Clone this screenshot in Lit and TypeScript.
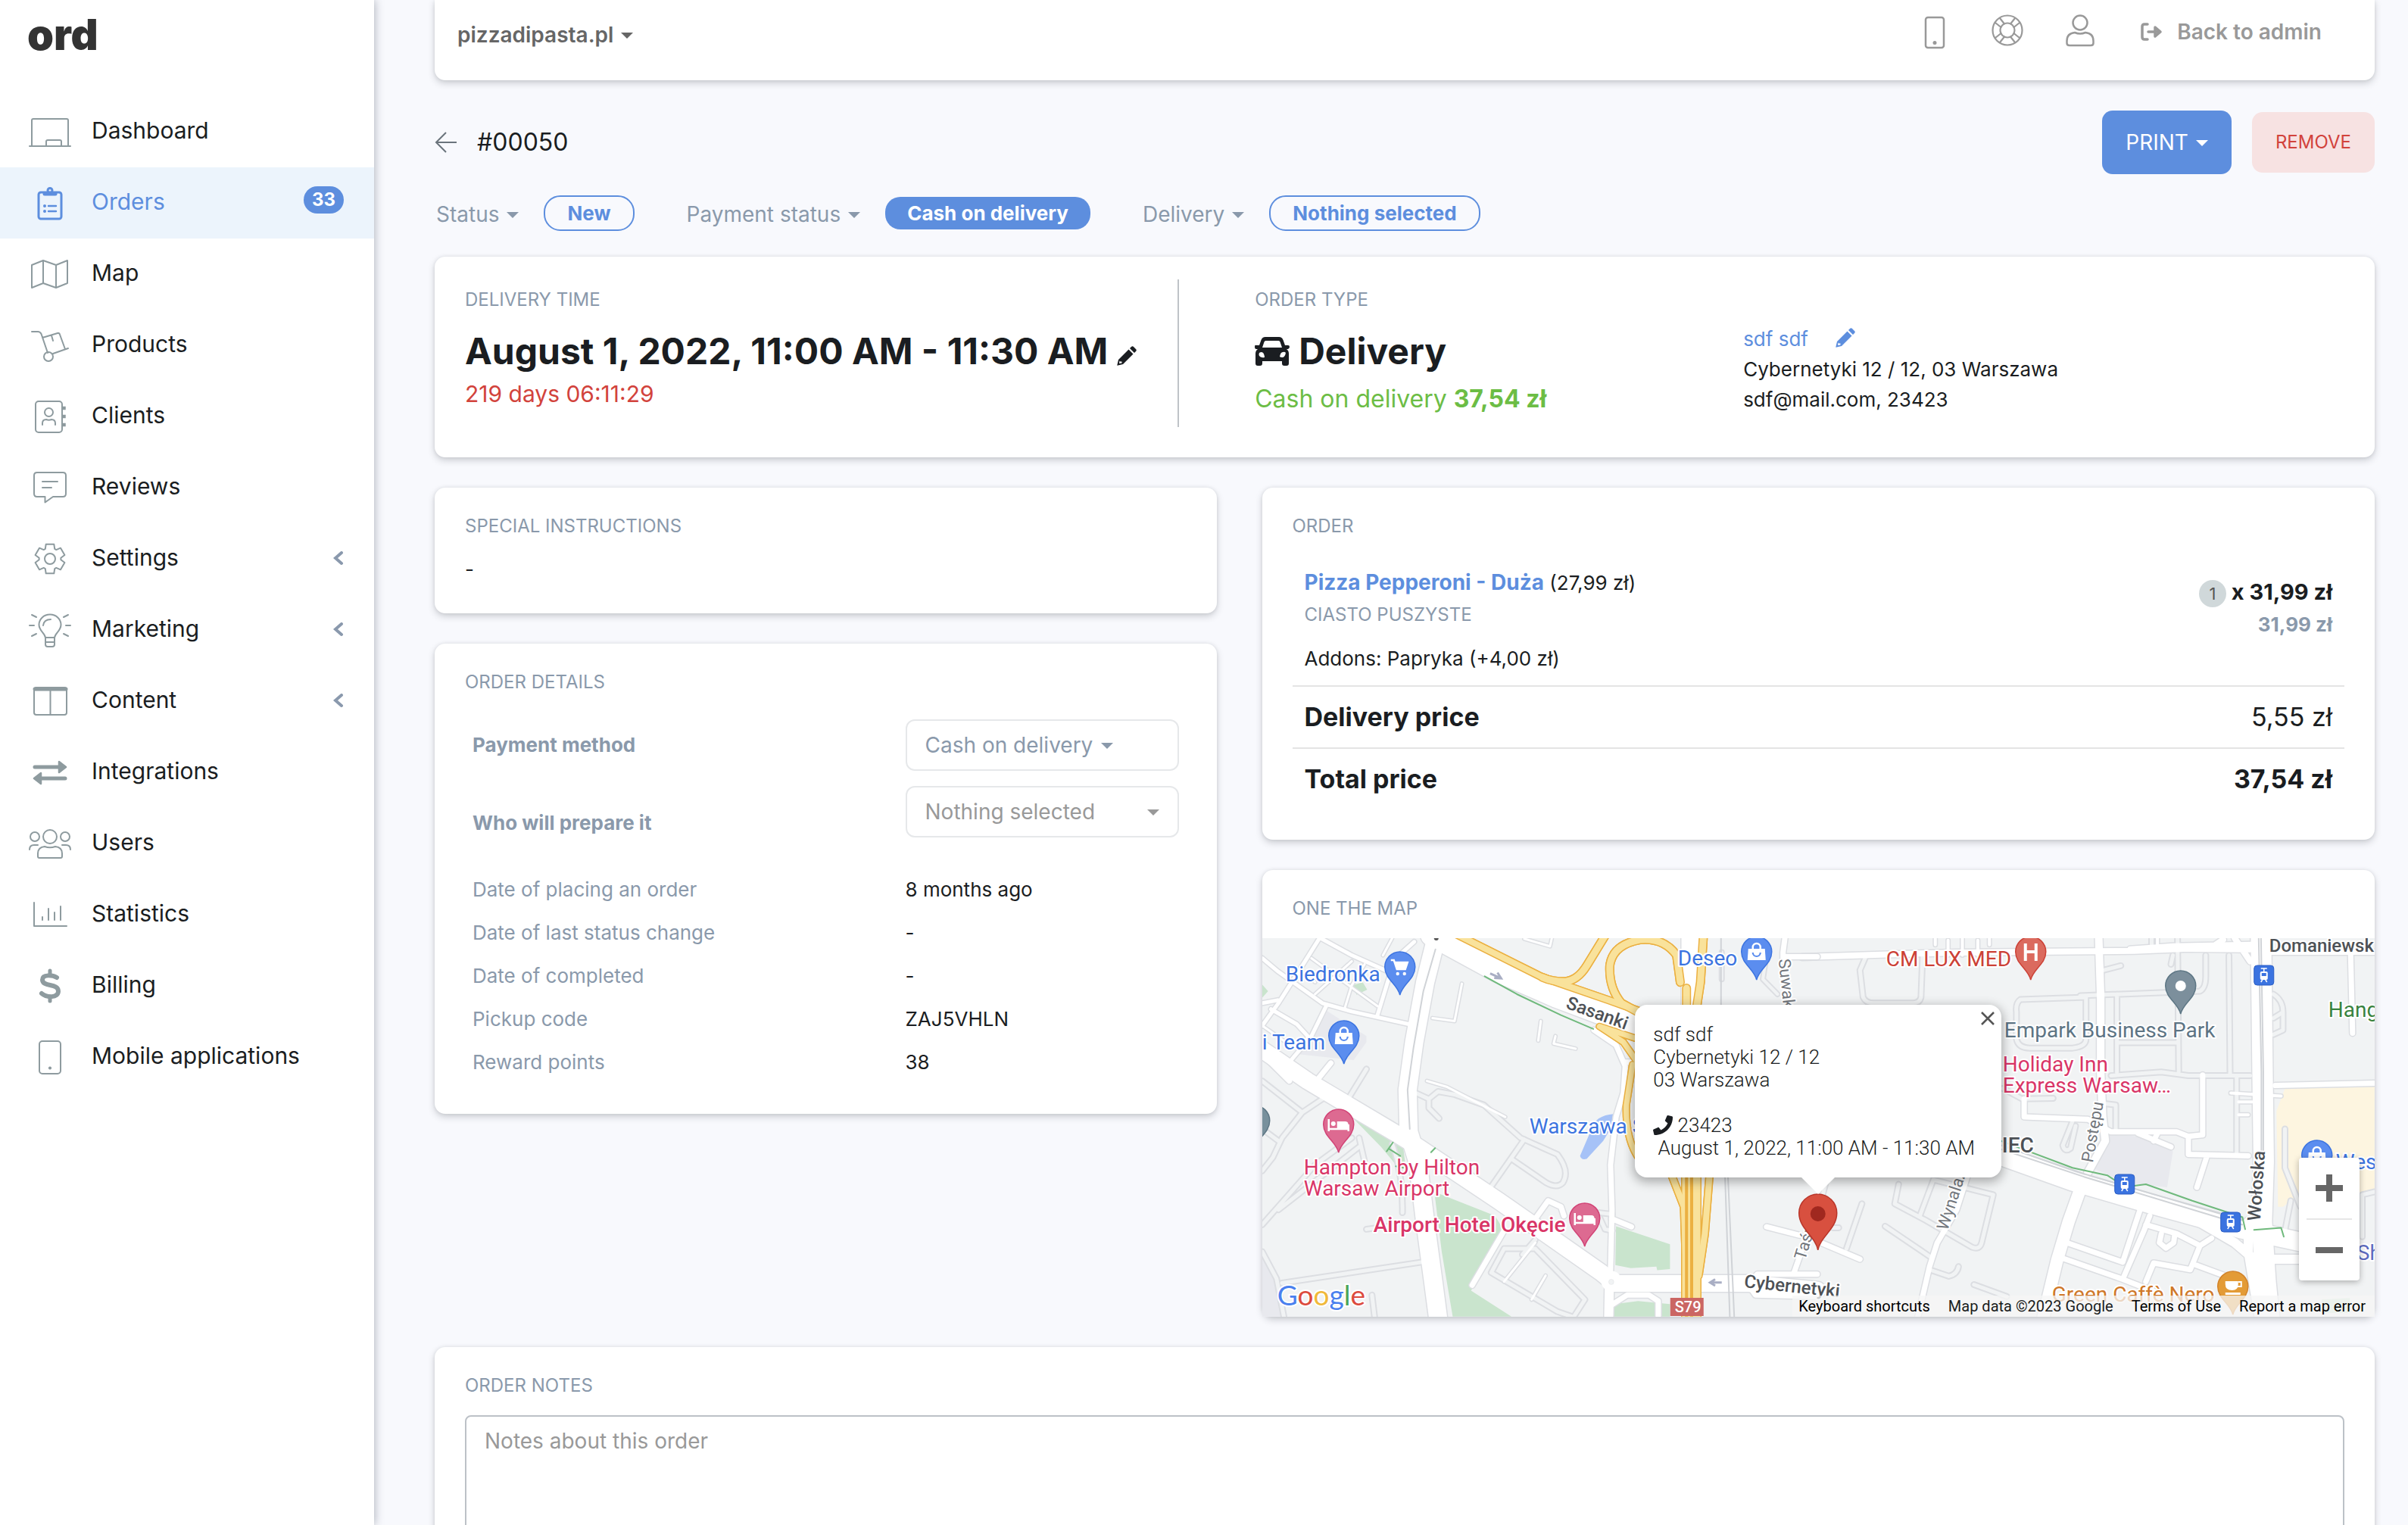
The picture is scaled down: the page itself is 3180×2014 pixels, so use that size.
import { LitElement, html, svg, css, nothing } from "lit";
import { customElement, property } from "lit/decorators.js";
import { classMap } from "lit/directives/class-map.js";

const gearPath = (() => {
  const pts: string[] = [];
  for (let i = 0; i < 6; i++) {
    const base = (i * 60 - 90) * (Math.PI / 180);
    const steps: Array<[number, number]> = [
      [-0.44, 14.5],
      [-0.27, 20],
      [0.27, 20],
      [0.44, 14.5],
    ];
    for (const [a, r] of steps) {
      pts.push(`${(30 + Math.cos(base + a) * r).toFixed(1)} ${(30 + Math.sin(base + a) * r).toFixed(1)}`);
    }
  }
  return `M${pts.join("L")}Z`;
})();

const icons: Record<string, unknown> = {
  dashboard: svg`<path d="M6 49V15q0-2 2-2H52q2 0 2 2V49M3 49H57M25 49V43q0-2 2-2H43q2 0 2 2V49"/>`,
  orders: svg`<g stroke-width="3"><rect x="15" y="16" width="30" height="35" rx="3"/><path d="M23 34h0M23 41h0" stroke-width="4"/><path d="M28 34H38M28 41H38" stroke-width="2.4"/><path d="M23 18H37" stroke-width="5"/><circle cx="30" cy="13.500" r="3"/></g>`,
  map: svg`<path d="M6 18L21 12L38 18L53 12V42L38 48L21 42L6 48ZM21 12V42M38 18V48"/>`,
  products: svg`<path d="M6 12H14q3 0 4.500 3L27 40M34 41L54 34M20 20L40 14q2-.5 2.700 1L50 35M32 17L34 24"/><circle cx="28" cy="45" r="6"/>`,
  clients: svg`<rect x="11" y="10" width="35" height="41" rx="4"/><circle cx="28.500" cy="24.500" r="5.500"/><path d="M20 41V39q0-5 5-5q3.500 1.500 7 0q5 0 5 5V41"/><path d="M48 19h0.500M48 30h0.500M48 41h0.500" stroke-width="4.500" stroke-linecap="square"/>`,
  reviews: svg`<path d="M13 10H47q4 0 4 4V38q0 4-4 4H34L23.500 49.500V42H13q-4 0-4-4V14q0-4 4-4ZM20 22H40M20 30H32"/>`,
  settings: svg`<path d="${gearPath}"/><circle cx="30" cy="30" r="7"/>`,
  marketing: svg`<path d="M24 40C23 34 15.500 31 15.500 23A14.500 13.500 0 0 1 44.500 23C44.500 31 37 34 36 40ZM24 40V49q0 3 3 3H33q3 0 3-3V40M24 46H36M21 24q1-8 10-8M3 24H9M51 24H57M6 10L12 13M54 10L48 13M6 38L12 35M54 38L48 35"/>`,
  content: svg`<rect x="9" y="12" width="43" height="36" rx="3"/><path d="M30.500 14V48"/><path d="M10 14H51" stroke-width="5"/>`,
  integrations: svg`<path d="M10 23H44M16 38H50" stroke-width="5"/><path d="M42 16L51 23L42 30ZM18 31L9 38L18 45Z" fill="currentColor" stroke-width="2.500"/>`,
  users: svg`<circle cx="30" cy="21" r="9"/><circle cx="10" cy="21" r="6"/><circle cx="50" cy="21" r="6"/><path d="M14 47V43q0-8 9-9q7 2.500 14 0q9 1 9 9V47q0 2-2 2H16q-2 0-2-2ZM3 38q0-6 6-6H14M57 38q0-6-6-6H46"/>`,
  statistics: svg`<path d="M9 14V45H52M20 33V37M28 22V37M36 27V37M44 19V37"/>`,
  billing: svg`<path d="M39 19C34 16 20 14 20 22C20 32 41 26 41 37C41 46 26 46 19 40" stroke-width="6"/><path d="M30 10V16M30 44V50" stroke-width="5"/>`,
  mobile: svg`<rect x="16" y="9" width="28" height="43" rx="4"/><circle cx="30" cy="44.500" r="1.800" fill="currentColor" stroke="none"/><circle cx="30" cy="44.500" r="1"/>`,
};

const pencil = html`<svg class="pencil" viewBox="0 0 26 26" aria-hidden="true">
  <path fill="currentColor" fill-rule="evenodd" d="M15.500 4.500L21.500 10.500L8 24L1.500 25.500Q0 26 .5 24.500L2 18ZM3.500 19.500L3 23L6.500 22.500V20.500H4.500ZM17 3L19 1Q20.500-.5 22 1L25 4Q26.500 5.500 25 7L23 9Z"/>
</svg>`;

const caret = html`<svg class="caret" viewBox="0 0 16 8" aria-hidden="true"><path fill="currentColor" d="M0 0H16L8 8Z"/></svg>`;

interface NavItem {
  icon: string;
  label: string;
  badge?: string;
  nested?: boolean;
  active?: boolean;
}

const NAV: NavItem[] = [
  { icon: "dashboard", label: "Dashboard" },
  { icon: "orders", label: "Orders", badge: "33", active: true },
  { icon: "map", label: "Map" },
  { icon: "products", label: "Products" },
  { icon: "clients", label: "Clients" },
  { icon: "reviews", label: "Reviews" },
  { icon: "settings", label: "Settings", nested: true },
  { icon: "marketing", label: "Marketing", nested: true },
  { icon: "content", label: "Content", nested: true },
  { icon: "integrations", label: "Integrations" },
  { icon: "users", label: "Users" },
  { icon: "statistics", label: "Statistics" },
  { icon: "billing", label: "Billing" },
  { icon: "mobile", label: "Mobile applications" },
];

@customElement("side-nav")
class SideNav extends LitElement {
  static styles = css`
    :host {
      display: block;
      background: #fff;
      box-shadow: 0 0 12px rgba(40, 50, 70, 0.4);
      position: relative;
      z-index: 1;
    }
    .logo {
      display: block;
      padding: 14px 36px 0;
      height: 113px;
      font-size: 56px;
      font-weight: 900;
      line-height: 64px;
      color: #333;
      text-decoration: none;
    }
    ul {
      list-style: none;
      margin: 0;
      padding: 0;
    }
    .item {
      display: flex;
      align-items: center;
      padding: 0 40px 0 36px;
      height: 94px;
      color: #1a1d21;
      text-decoration: none;
      font-size: 30px;
    }
    .item.active {
      background: #ecf4fc;
      color: #5d8ede;
    }
    .icon {
      width: 60px;
      height: 60px;
      margin-right: 25px;
      color: #8e9b9f;
      fill: none;
      stroke: currentColor;
      stroke-width: 2;
      stroke-linecap: round;
      stroke-linejoin: round;
    }
    .active .icon {
      color: #5d8ede;
    }
    .label {
      flex: 1;
      padding-bottom: 4px;
    }
    .badge {
      align-self: flex-start;
      margin-top: 25px;
      padding: 0 11px;
      border-radius: 18px;
      background: #5d8ede;
      color: #fff;
      font-size: 24px;
      font-weight: 700;
      line-height: 36px;
    }
    .chevron {
      width: 14px;
      height: 20px;
      fill: none;
      stroke: #8a99ad;
      stroke-width: 4;
      stroke-linecap: round;
    }
  `;

  render() {
    return html`
      <a class="logo" href="#home">ord</a>
      <nav aria-label="Main">
        <ul>
          ${NAV.map(
            (n) => html`<li>
              <a class=${classMap({ item: true, active: !!n.active })} href="#${n.icon}">
                <svg class="icon" viewBox="0 0 60 60" aria-hidden="true">${icons[n.icon]}</svg>
                <span class="label">${n.label}</span>
                ${n.badge ? html`<span class="badge">${n.badge}</span>` : nothing}
                ${n.nested
                  ? html`<svg class="chevron" viewBox="0 0 14 20" aria-hidden="true"><path d="M11 2L3 9L11 16"/></svg>`
                  : nothing}
              </a>
            </li>`
          )}
        </ul>
      </nav>
    `;
  }
}

/* Street geometry is kept in two survey tiles, west and east, each with its own projection onto the map. */
type Road = [kind: "street" | "alley" | "highway" | "rail" | "path", width: number, d: string];

const WEST_ROADS: Road[] = [
  ["alley", 5, "M56 730L165 835L110 920L85 985L56 1030M165 835L220 790M56 890L100 930M56 1210L200 1010L300 920M100 1160L320 950M320 920L335 1000"],
  ["alley", 5, "M475 770L510 790L535 765L580 775L660 810L760 920L860 975Q895 1030 875 1070Q860 1090 830 1070L735 990M770 925L670 1100M510 790V820L538 855"],
  ["alley", 5, "M290 790L340 690M410 940Q440 1040 438 1170M340 1225L400 1215M975 1170L1010 1175M975 1185L990 1225L1010 1230"],
  ["alley", 5, "M715 1290L680 1370L860 1500L900 1517M715 1290L800 1290L935 1460L905 1517M800 1260L765 1310M110 1405L490 1335M56 1300L95 1390L115 1517M355 1445L362 1517"],
  ["rail", 2, "M1306 253V475M1317 1052L1330 1517M1325 1052L1342 1517"],
  ["alley", 4, "M1430 310L1420 390L1460 440M1308 300V390"],
  ["street", 5, "M212 253L165 345L100 470L56 545M215 253L300 310L400 365M56 320L100 365L220 470L300 498L455 540M370 510L400 390L420 320L470 265M230 480L190 580L135 660M56 470L98 460M80 490L150 540L180 580L175 620"],
  ["street", 3, "M190 320L370 480M300 330L200 440M410 253L385 310M280 490L300 410L335 340M155 360L200 400M56 545L120 600M600 405L580 530L520 520M815 530L808 595M855 580L850 605L910 622M505 730L560 750L718 850M840 280L845 253M770 255L840 280"],
  ["street", 7, "M130 730L56 640M210 720L243 670M800 1190L835 1130L870 1150L878 1180M1008 1190L1062 1217M1430 1217L1520 1245M715 1230L628 1412"],
  ["street", 3, "M800 1270L715 1400M828 1380L790 1460"],
  ["street", 7, "M960 560L1020 610L1045 680L1040 770L1020 850L1005 1010L1009 1160L1005 1360M1043 667H1071"],
  ["street", 7, "M1005 1480L1050 1445H1110L1135 1465V1517M1480 253L1475 300V330M1475 315H1568M1380 1410L1405 1375H1568M1380 1410L1400 1445L1568 1450M1505 1370L1525 1300"],
  ["street", 12, "M1002 1400L1000 1517"],
  ["street", 22, "M1010 1406H1380L1568 1428"],
  ["street", 22, "M40 612L180 730L420 905L480 950L700 1130L980 1370L1008 1398"],
  ["street", 24, "M530 253L500 400L470 600L452 760L455 900L480 1000L500 1200L522 1400L536 1530"],
  ["street", 32, "M520 240L700 360L860 445L1000 510L1080 545"],
  ["rail", 2, "M528 290L495 430L468 620L452 760L458 890"],
  ["street", 26, "M1225 240V480"],
  ["highway", 8, "M585 240L820 384L1000 460L1080 495"],
  ["highway", 9, "M990 245L940 345Q915 395 880 398Q845 398 820 384"],
  ["highway", 9, "M1080 500L1035 470Q1000 420 1003 345Q1010 275 1085 258Q1150 250 1185 310L1195 400"],
  ["highway", 9, "M1258 245L1250 400L1240 480M1212 420V480"],
  ["highway", 7, "M975 548L1040 600L1080 670M975 548L1080 590M1065 675L1048 810Q1045 920 1080 985"],
  ["highway", 8, "M1170 1040L1205 1150L1212 1400M1275 1040L1262 1240L1245 1380"],
  ["highway", 24, "M1225 1030V1530"],
  ["path", 2, "M662 380L750 440L870 510L958 556M395 965L412 935M402 957L432 980M516 968L527 954M420 1015L440 1020"],
];

const EAST_ROADS: Road[] = [
  ["alley", 5, "M165 315L150 360L158 450Q165 470 185 470H285Q305 470 308 450L312 315M735 450L565 458Q552 470 555 500V590Q560 620 590 620H700Q735 615 735 590V450"],
  ["alley", 5, "M720 445L1030 430Q1045 420 1045 380V310M815 440V700M820 602H970M972 253L975 700M1105 310L1108 710M800 712L930 700L1000 712H1160M1125 715V970M905 253V285M960 310L955 340"],
  ["alley", 5, "M780 360L825 345M780 805L812 810V900M700 865L675 945Q680 970 695 955L708 880M520 755L570 790L650 788"],
  ["alley", 5, "M250 1075L240 1140L320 1195L440 1285Q460 1295 465 1270L495 1110L340 1060L305 1180M215 1215L335 1320M330 1360L380 1382Q402 1375 405 1350M445 1410L530 1450M155 1140L115 1290M80 1220H95M65 1052L40 1180"],
  ["alley", 5, "M1220 440Q1245 460 1245 500L1220 520M1245 500V560L1220 575M1250 890V1020L1290 1150M1250 1230L1265 1130M1450 1110L1482 1100M1450 1110V1250"],
  ["street", 4, "M345 253V275M378 260V310M415 253V310M455 260V310M485 253V275M1130 800H1165M1130 843H1155M1110 770L1240 780M920 253V285"],
  ["street", 7, "M40 1265L150 1325M1420 305L1425 570M575 790V850L740 858L800 900H970L1000 915L1037 910V710M1000 915V975L1155 980M1047 985L1022 1085M870 905L955 950M910 930L920 905"],
  ["street", 7, "M875 1160L830 1335L690 1272M675 1322L830 1392L925 1440M890 1210L970 1240L1030 1280L1005 1360L910 1338L890 1400M1030 1280L1060 1255M1020 1345L1125 1395M830 1392L885 1230L900 1180M930 1240L925 1270L942 1288L962 1270L965 1240"],
  ["street", 8, "M0 316L220 307L400 301L640 298L860 295L1000 288L1160 290M850 290L960 280L1160 275M1070 275L1090 258M1120 253L1160 330"],
  ["street", 7, "M430 1040L400 1160L350 1270L330 1350L300 1517M1225 745L1482 737M1210 300H1482"],
  ["street", 10, "M768 253L773 450V700L778 850L785 930L740 1035"],
  ["street", 16, "M722 1085L690 1200L660 1330L625 1517"],
  ["street", 12, "M1000 1180L1120 1270L1170 1325H1290M1155 1200V1300L1185 1530"],
  ["street", 27, "M1188 240L1192 700L1195 1000L1190 1200L1200 1400L1210 1530"],
  ["street", 25, "M505 975L700 1065L900 1140L1140 1225L1300 1270"],
  ["rail", 2, "M1188 253L1194 700V980M1182 253L1189 700V980M515 945L730 1040L1140 1195M515 958L730 1050L1140 1210"],
  ["path", 2, "M515 930L700 1020L790 1045L820 1070M860 1080L890 1075L1010 1130L1140 1185L1147 1225M1170 1227L1240 1220L1247 1250"],
];

const roadLayers = (roads: Road[]) => svg`
  ${roads.map(([kind, w, d]) => svg`<path class="${kind} casing" stroke-width=${w + (kind === "alley" ? 4 : 3)} d=${d} />`)}
  ${roads.filter(([k]) => k === "alley").map(([, w, d]) => svg`<path class="alley" stroke-width=${w} d=${d} />`)}
  ${roads.filter(([k]) => k === "street").map(([, w, d]) => svg`<path class="street" stroke-width=${w} d=${d} />`)}
  ${roads.filter(([k]) => k === "highway").map(([, w, d]) => svg`<path class="highway casing" stroke-width=${w + 3} d=${d} />`)}
  ${roads.filter(([k]) => k === "highway").map(([, w, d]) => svg`<path class="highway" stroke-width=${w} d=${d} />`)}
  ${roads.filter(([k]) => k === "rail" || k === "path").map(([k, w, d]) => svg`<path class=${k} stroke-width=${w} d=${d} />`)}
`;

const glyphs: Record<string, unknown> = {
  cart: svg`<path d="M-12-46H-8L-4-34H7L10-43H-7" fill="none" stroke="#fff" stroke-width="2.500"/><path d="M-7-43H10L7-35H-4Z" fill="#fff"/><circle cx="-3" cy="-28" r="2.200" fill="#fff"/><circle cx="6" cy="-28" r="2.200" fill="#fff"/>`,
  bag: svg`<path d="M-11-41H11L12-26H-12Z" fill="#fff"/><path d="M-5-40V-43A5 5 0 0 1 5-43V-40" fill="none" stroke="#fff" stroke-width="2.500"/><path d="M-5-36A5 5 0 0 0 5-36" fill="none" stroke="#5b8def" stroke-width="2.200"/>`,
  bed: svg`<path d="M-13-44V-28M-13-31H13V-28M13-31V-37" fill="none" stroke="#fff" stroke-width="2.500"/><circle cx="-7" cy="-38" r="3" fill="#fff"/><path d="M-2-41H9Q13-41 13-36V-32H-2Z" fill="#fff"/>`,
  hospital: svg`<path d="M-7-48V-25M7-48V-25M-7-37H7" fill="none" stroke="#fff" stroke-width="4"/>`,
  dot: svg`<circle cx="0" cy="-37" r="7" fill="#fff"/>`,
  cup: svg`<path d="M-10-44H7V-40Q7-32-1-32Q-10-32-10-40ZM-10-29H10V-26H-10Z" fill="#fff"/><path d="M7-43H11V-37H6" fill="none" stroke="#fff" stroke-width="2"/>`,
};

const pin = (x: number, y: number, fill: string, edge: string, glyph: string) => svg`
  <g transform="translate(${x} ${y})">
    <path d="M0 0C-3-14-20-21-20-37A20 20 0 0 1 20-37C20-21 3-14 0 0Z" fill=${fill} stroke=${edge} stroke-width="1.500" />
    ${glyphs[glyph]}
  </g>`;

const tram = (x: number, y: number) => svg`
  <g transform="translate(${x} ${y})">
    <rect x="-13" y="-13" width="26" height="26" rx="4" fill="#3b73e0" stroke="#2a5dc4" />
    <path d="M-4-9H4M0-9V-5M-4 9L-2 6M4 9L2 6" stroke="#fff" stroke-width="1.500" fill="none" />
    <rect x="-5" y="-5" width="10" height="11" rx="2" fill="#fff" />
    <path d="M-3-3H3V1H-3Z" fill="#3b73e0" />
  </g>`;

@customElement("delivery-map")
class DeliveryMap extends LitElement {
  static styles = css`
    :host {
      display: block;
      position: relative;
      height: 500px;
      overflow: hidden;
      font-family: Roboto, "Liberation Sans", sans-serif;
      background: #f1f3f4;
    }
    .canvas {
      display: block;
      width: 100%;
      height: 100%;
    }
    .tile path {
      vector-effect: non-scaling-stroke;
    }
    .street,
    .alley,
    .highway,
    .rail,
    .path {
      fill: none;
      stroke-linejoin: round;
      stroke-linecap: round;
    }
    .street { stroke: #fff; }
    .alley { stroke: #f1f3f4; }
    .street.casing,
    .alley.casing { stroke: #dcdee2; }
    .highway { stroke: #f9e29b; }
    .highway.casing { stroke: #ebb041; }
    .rail { stroke: #d0d3d7; }
    .path { stroke: #6fb97c; }
    .rail.casing,
    .path.casing { stroke: none; }
    .place {
      font-size: 28px;
      stroke: #fff;
      stroke-width: 4px;
      stroke-linejoin: round;
      paint-order: stroke;
    }
    .strong { font-weight: 500; }
    .name {
      font-size: 24px;
      font-weight: 500;
      fill: #4d5156;
    }
    .district {
      font-weight: 500;
      fill: #4d5156;
    }
    .lane {
      font-size: 22px;
      fill: #73777d;
    }
    .blue { fill: #3c74e0; }
    .rose { fill: #d93567; }
    .red { fill: #cc4136; }
    .slate { fill: #5d7484; }
    .green { fill: #39833f; }
    .amber { fill: #cf7829; }
    .violet { fill: #5c6bc0; }
    .shield {
      font-size: 20px;
      font-weight: 500;
      fill: #fff;
    }
    .brand {
      font-family: Lato, Roboto, sans-serif;
      font-size: 37px;
      stroke: #fff;
      stroke-width: 4px;
      paint-order: stroke;
    }
    .bubble {
      position: absolute;
      left: 50%;
      top: 88px;
      transform: translateX(-50%);
      box-sizing: border-box;
      width: 484px;
      padding: 24px;
      border-radius: 16px;
      background: #fff;
      box-shadow: 0 4px 14px 2px rgba(0, 0, 0, 0.3);
      color: #1a1d21;
      font-size: 26px;
      font-weight: 300;
      line-height: 30px;
      white-space: nowrap;
    }
    .bubble::after {
      content: "";
      position: absolute;
      left: 50%;
      top: 100%;
      border: 22px solid transparent;
      border-top-color: #fff;
      border-bottom: 0;
      transform: translateX(-50%);
    }
    .bubble p {
      margin: 0 0 30px;
    }
    .bubble p:last-of-type {
      margin: 0;
    }
    .phone {
      width: 26px;
      height: 26px;
      vertical-align: -4px;
    }
    .close {
      position: absolute;
      right: 8px;
      top: 8px;
      width: 20px;
      height: 20px;
      padding: 0;
      border: 0;
      background: none;
      color: #555;
    }
    .close svg {
      display: block;
    }
    .zoom {
      position: absolute;
      right: 20px;
      top: 290px;
      width: 80px;
      border-radius: 4px;
      background: #fff;
      box-shadow: 0 2px 8px rgba(0, 0, 0, 0.3);
      color: #666;
    }
    .zoom button {
      display: grid;
      place-items: center;
      width: 100%;
      height: 80px;
      padding: 0;
      border: 0;
      background: none;
      color: inherit;
    }
    .zoom hr {
      margin: 0 10px;
      border: 0;
      height: 2px;
      background: #e6e6e6;
    }
    .legal {
      position: absolute;
      right: 0;
      bottom: 0;
      display: flex;
      gap: 24px;
      padding: 0 12px 0 8px;
      background: rgba(245, 245, 245, 0.75);
      font-size: 20px;
      line-height: 28px;
    }
    .legal a,
    .legal button {
      padding: 0;
      border: 0;
      background: none;
      color: #000;
      font: inherit;
      text-decoration: none;
    }
  `;

  render() {
    return html`
      <svg class="canvas" viewBox="0 0 1470 500" preserveAspectRatio="xMidYMid slice" role="img" aria-label="Map">
        <rect width="1470" height="500" fill="#f1f3f4" />
        <g class="tile" transform="matrix(.5102 0 0 .3954 713 -100)">
          <path fill="#fdf5e0" d="M1250 755L1482 748V1100L1450 1105L1285 1110L1245 1150H1232L1228 830Z" />
          <path fill="#e8e9ee" d="M800 905L900 920L960 965L945 1085L840 1070L750 1020Z" />
          <path fill="#cfe6d2" d="M1345 1460L1418 1455V1505H1345Z" />
          ${roadLayers(EAST_ROADS)}
        </g>
        <g class="tile" transform="matrix(.4847 0 0 .3954 -27 -100)">
          <path fill="#e8e9ee" d="M225 490L340 580V600L305 660L150 640L190 590ZM56 1300L95 1390L115 1517H56Z" />
          <path fill="#c9e4cd" d="M525 1100L690 1180L715 1230L625 1430L735 1517H575L545 1300ZM300 850L440 950L447 1020L420 1010L380 950ZM1020 1215L1167 1275V1358L1132 1362L1130 1350L1060 1355L1018 1345ZM1015 1475L1080 1465L1167 1475V1517H1015ZM303 410L330 400L342 425L313 442ZM56 408L72 430L56 452Z" />
          <path fill="#a6c2f7" d="M1013 840Q965 845 955 885L922 980Q925 995 940 990L985 930L1005 890Z" />
          ${roadLayers(WEST_ROADS)}
          <path fill="none" stroke="#ebb041" stroke-width="4" d="M1212 1030V1517M1226 1030V1517" />
          <ellipse cx="1007" cy="1398" rx="28" ry="34" fill="#fff" />
          <ellipse cx="1007" cy="1401" rx="7" ry="9" fill="#f1f3f4" stroke="#dcdee2" />
          <path fill="none" stroke="#a9aec4" stroke-width="3" d="M677 371L705 386M697 368L707 387L688 386M1308 1403H1276M1290 1392L1276 1403L1290 1414" />
        </g>
        <circle cx="230" cy="0" r="3" fill="#555" />

        ${pin(-10, 278, "#78909c", "#5d7684", "")}
        ${pin(182, 75, "#5b8def", "#3c74e0", "cart")}
        ${pin(108, 166, "#5b8def", "#3c74e0", "bag")}
        ${pin(101, 283, "#dd6a91", "#d24376", "bed")}
        ${pin(426, 407, "#dd6a91", "#d24376", "bed")}
        ${pin(653, 55, "#5b8def", "#3c74e0", "bag")}
        ${pin(1015, 55, "#db6a5e", "#cc4136", "hospital")}
        ${pin(1213, 100, "#7c8f9c", "#5d7684", "dot")}
        ${pin(1393, 324, "#5b8def", "#3c74e0", "bag")}
        ${pin(1282, 497, "#e39b36", "#d2832a", "cup")}
        ${tram(1323, 49)} ${tram(1139, 325)} ${tram(1279, 375)}

        <text class="place blue" x="31" y="57">Biedronka</text>
        <text class="place blue" x="0" y="147">i Team</text>
        <text class="place rose" x="55" y="312">Hampton by Hilton</text>
        <text class="place rose" x="55" y="340">Warsaw Airport</text>
        <text class="place rose strong" x="147" y="388">Airport Hotel Okęcie</text>
        <text class="place blue" x="353" y="258">Warszawa S</text>
        <text class="place blue" x="549" y="36">Deseo</text>
        <text class="place red" x="824" y="37">CM LUX MED</text>
        <text class="place slate" x="980" y="131">Empark Business Park</text>
        <text class="place rose" x="978" y="176">Holiday Inn</text>
        <text class="place rose" x="978" y="204">Express Warsaw…</text>
        <text class="place green" x="1408" y="104">Hang</text>
        <text class="place blue" x="1418" y="305">Wes</text>
        <text class="place violet" x="1446" y="425">Sh</text>
        <text class="place amber" x="1043" y="480">Green Caffè Nero</text>
        <text class="place district" x="977" y="283">IEC</text>
        <text class="place name" x="1330" y="18">Domaniewsk</text>
        <text class="place name" transform="translate(400 92) rotate(20)">Sasanki</text>
        <text class="place name" transform="translate(636 461) rotate(6)">Cybernetyki</text>
        <text class="place name" transform="translate(1318 374) rotate(-86)">Wołoska</text>
        <text class="place lane" transform="translate(682 28) rotate(84)">Suwak</text>
        <text class="place lane" transform="translate(717 426) rotate(-73)">Taśn</text>
        <text class="place lane" transform="translate(1097 297) rotate(-80)">Postępu</text>
        <text class="place lane" transform="translate(905 387) rotate(-72)">Wynalaz</text>

        <rect x="539" y="475" width="44" height="24" fill="#cb6663" />
        <text class="shield" x="545" y="494">S79</text>
        <text class="brand" x="20" y="485"><tspan fill="#4a80ee">G</tspan><tspan fill="#dc4b3e">o</tspan><tspan fill="#f0b93a">o</tspan><tspan fill="#4a80ee">g</tspan><tspan fill="#4ba658">l</tspan><tspan fill="#dc4b3e">e</tspan></text>

        <g transform="translate(734 412)">
          <path d="M0 0C-3-18-25-28-25-49A25 25 0 0 1 25-49C25-28 3-18 0 0Z" fill="#d8503f" stroke="#b93529" stroke-width="1.500" />
          <circle cx="0" cy="-48" r="10" fill="#a0281f" />
        </g>
      </svg>

      <div class="bubble">
        <p>sdf sdf<br />Cybernetyki 12 / 12<br />03 Warszawa</p>
        <p><svg class="phone" viewBox="0 0 512 512" aria-hidden="true"><path fill="currentColor" d="M493 25L389 1c-11-3-23 3-27 14l-48 112c-4 10-1 21 7 28l61 50c-36 76-98 139-177 177l-50-61c-7-8-18-11-28-7L15 362C4 366-2 378 1 389l24 104c2 11 12 19 23 19 256 0 464-207 464-464 0-11-8-21-19-23z"/></svg> 23423<br />&nbsp;August 1, 2022, 11:00 AM - 11:30 AM</p>
        <button class="close" aria-label="Close">
          <svg width="20" height="20" viewBox="0 0 20 20"><path d="M2 2L18 18M18 2L2 18" stroke="currentColor" stroke-width="2.500" /></svg>
        </button>
      </div>

      <div class="zoom">
        <button aria-label="Zoom in"><svg width="36" height="36" viewBox="0 0 36 36"><path d="M18 0V36M0 18H36" stroke="currentColor" stroke-width="8" /></svg></button>
        <hr />
        <button aria-label="Zoom out"><svg width="36" height="36" viewBox="0 0 36 36"><path d="M0 18H36" stroke="currentColor" stroke-width="8" /></svg></button>
      </div>

      <div class="legal">
        <button>Keyboard shortcuts</button>
        <span>Map data ©2023 Google</span>
        <a href="#terms">Terms of Use</a>
        <a href="#report">Report a map error</a>
      </div>
    `;
  }
}

@customElement("panel-card")
class PanelCard extends LitElement {
  @property() heading = "";

  static styles = css`
    :host {
      display: block;
      border-radius: 14px;
      background: #fff;
      box-shadow: 0 4px 10px rgba(50, 55, 65, 0.22), 0 0 4px rgba(50, 55, 65, 0.1);
    }
    h2 {
      margin: 0;
      padding: 35px 40px 23px;
      color: #8a99ab;
      font-size: 24px;
      font-weight: 400;
      line-height: 32px;
      text-transform: uppercase;
    }
  `;

  render() {
    return html`<h2>${this.heading}</h2><slot></slot>`;
  }
}

@customElement("app-root")
class AppRoot extends LitElement {
  static styles = css`
    :host {
      display: grid;
      grid-template-columns: 494px 1fr;
      height: 100vh;
      overflow: hidden;
      background: #f8f9fd;
      color: #1a1d21;
      font-family: Inter, "Liberation Sans", sans-serif;
      font-size: 26px;
      line-height: 36px;
    }
    main {
      overflow: hidden;
      padding: 0 44px 0 80px;
    }
    button,
    select,
    textarea {
      font: inherit;
      color: inherit;
    }
    button {
      display: inline-flex;
      align-items: center;
      padding: 0;
      border: 0;
      background: none;
    }
    a {
      color: #5d8ede;
      text-decoration: none;
    }
    .caret {
      width: 16px;
      height: 8px;
      margin: 2px 0 0 10px;
      flex: none;
    }
    .card {
      border-radius: 14px;
      background: #fff;
      box-shadow: 0 4px 10px rgba(50, 55, 65, 0.22), 0 0 4px rgba(50, 55, 65, 0.1);
    }
    .topbar {
      display: flex;
      justify-content: space-between;
      align-items: center;
      height: 92px;
      padding: 0 70px 14px 30px;
      border-radius: 0 0 14px 14px;
      font-size: 28px;
      font-weight: 600;
      color: #666;
    }
    .tools {
      display: flex;
      align-items: center;
      gap: 48px;
      padding-bottom: 8px;
      color: #999;
    }
    .tools svg {
      display: block;
      fill: none;
      stroke: currentColor;
      stroke-linecap: round;
      stroke-linejoin: round;
    }
    .back {
      display: flex;
      align-items: center;
      gap: 19px;
      margin-left: 8px;
      color: #999;
    }
    .head {
      display: flex;
      align-items: center;
      margin-top: 40px;
      gap: 27px;
    }
    .head h1 {
      flex: 1;
      margin: 0;
      font-size: 32px;
      font-weight: 400;
    }
    .head .arrow {
      color: #6b747c;
    }
    .arrow svg {
      display: block;
    }
    .print {
      height: 84px;
      padding: 0 31px;
      border-radius: 14px;
      background: #5d8ede;
      color: #fff;
      font-size: 28px;
    }
    .remove {
      height: 80px;
      padding: 0 31px;
      border-radius: 14px;
      background: #f7e2e2;
      color: #d2433c;
      font-size: 24px;
    }
    .filters {
      display: flex;
      align-items: center;
      gap: 69px;
      margin: 28px 0 34px;
      padding-left: 2px;
      height: 47px;
      color: #8a99ab;
      font-size: 28px;
    }
    .filter {
      display: flex;
      align-items: center;
      gap: 33px;
    }
    .filter button {
      padding-top: 3px;
    }
    .pill {
      padding: 0 29px;
      border-radius: 20px;
      background: #5d8ede;
      color: #fff;
      font-size: 26px;
      font-weight: 700;
      line-height: 43px;
    }
    .pill.outline {
      border: 2px solid #5d8ede;
      border-radius: 22px;
      background: none;
      color: #5d8ede;
    }
    .summary {
      display: flex;
      padding: 30px 40px 40px;
    }
    .summary h2 {
      margin: 0 0 16px;
      color: #8a99ab;
      font-size: 24px;
      font-weight: 400;
      line-height: 32px;
    }
    .when {
      box-sizing: border-box;
      flex: 0 0 38%;
      padding: 11px 0 24px;
      border-right: 2px solid #bfc3c8;
    }
    .big {
      display: flex;
      align-items: center;
      gap: 12px;
      font-size: 48px;
      font-weight: 700;
      line-height: 72px;
      white-space: nowrap;
    }
    .big button {
      padding-top: 12px;
    }
    .pencil {
      width: 26px;
      height: 26px;
    }
    .overdue {
      color: #d2433c;
      font-size: 30px;
      line-height: 40px;
    }
    .type {
      display: grid;
      grid-template-columns: 13fr 16fr;
      flex: 1;
      padding: 11px 0 0 100px;
    }
    .car {
      width: 46px;
      height: 40px;
    }
    .due {
      margin-top: 7px;
      color: #6cbd45;
      font-size: 32px;
      line-height: 40px;
    }
    .client {
      padding-top: 48px;
      line-height: 40px;
    }
    .client button {
      margin-left: 36px;
      color: #5d8ede;
      vertical-align: -2px;
    }
    .columns {
      display: grid;
      grid-template-columns: repeat(12, 1fr);
      column-gap: 60px;
      align-items: start;
      margin: 40px 0;
    }
    .col {
      display: grid;
      gap: 40px;
      grid-column: span 5;
    }
    .col.wide {
      grid-column: span 7;
    }
    .text {
      margin: 0;
      padding: 0 40px 40px;
    }
    .sheet {
      padding: 0 40px 40px;
    }
    table {
      width: 100%;
      border-collapse: collapse;
    }
    th {
      font-weight: inherit;
      text-align: left;
    }
    .details {
      table-layout: fixed;
    }
    .details th,
    .details td {
      height: 57px;
      padding: 0 10px;
    }
    .details th {
      width: 60%;
      box-sizing: border-box;
      color: #8a99ab;
    }
    .details .strong th {
      font-weight: 700;
    }
    .details .strong td {
      padding: 10px;
    }
    .details .loose td {
      padding-bottom: 40px;
    }
    .field {
      display: flex;
      align-items: center;
      box-sizing: border-box;
      height: 68px;
      padding: 0 24px;
      border: 2px solid #e6e8ea;
      border-radius: 12px;
      color: #8a99ab;
      font-size: 28px;
    }
    .field select {
      appearance: none;
      padding: 0;
      border: 0;
      background: none;
      outline: 0;
    }
    .field.stretch {
      color: #999;
    }
    .field.stretch select {
      flex: 1;
      min-width: 0;
    }
    .lines td,
    .lines th {
      padding: 0 16px;
      height: 80px;
      font-size: 34px;
      text-align: right;
    }
    .lines th {
      text-align: left;
      font-weight: 700;
    }
    .lines tr + tr {
      border-top: 2px solid #e4e4e4;
    }
    .lines .product th {
      padding: 15px 16px 17px;
      font-size: 26px;
      font-weight: 400;
    }
    .lines .product td {
      padding-top: 28px;
      font-size: 29px;
      font-weight: 700;
      line-height: 40px;
      vertical-align: top;
    }
    .product a {
      font-size: 28px;
      font-weight: 700;
      line-height: 40px;
    }
    .variant {
      display: block;
      margin-bottom: 18px;
      color: #8a99ab;
      font-size: 24px;
      line-height: 45px;
    }
    .qty {
      display: inline-block;
      width: 36px;
      border-radius: 18px;
      background: #d0d8da;
      color: #555;
      font-size: 22px;
      font-weight: 400;
      line-height: 36px;
      text-align: center;
    }
    .each {
      display: block;
      color: #8a99ab;
      font-size: 26px;
      line-height: 45px;
    }
    .total td {
      font-weight: 700;
    }
    .notes {
      padding: 0 40px 40px;
    }
    textarea {
      display: block;
      box-sizing: border-box;
      width: 100%;
      height: 200px;
      padding: 14px 24px;
      border: 2px solid #bcc1c7;
      border-radius: 8px;
      background: #fff;
      font-size: 28px;
      line-height: 36px;
      resize: none;
    }
    textarea::placeholder {
      color: #999;
      opacity: 1;
    }
  `;

  private facts: Array<[string, string]> = [
    ["Date of placing an order", "8 months ago"],
    ["Date of last status change", "-"],
    ["Date of completed", "-"],
    ["Pickup code", "ZAJ5VHLN"],
    ["Reward points", "38"],
  ];

  private filters: Array<[string, string, boolean]> = [
    ["Status", "New", true],
    ["Payment status", "Cash on delivery", false],
    ["Delivery", "Nothing selected", true],
  ];

  render() {
    return html`
      <side-nav></side-nav>
      <main>
        <header class="card topbar">
          <button>pizzadipasta.pl ${caret}</button>
          <div class="tools">
            <button aria-label="Mobile app">
              <svg width="48" height="48" viewBox="0 0 48 48" stroke-width="2.500"><rect x="12" y="5" width="24" height="40" rx="3"/><path d="M24 38.500h0" stroke-width="5"/></svg>
            </button>
            <button aria-label="Help">
              <svg width="48" height="48" viewBox="0 0 48 48" stroke-width="2.200"><circle cx="24" cy="22" r="19.500"/><circle cx="24" cy="22" r="9.500"/><path d="M14 6L20 13.500M8 12L15.500 18M34 6L28 13.500M40 12L32.500 18M14 38L20 30.500M8 32L15.500 26M34 38L28 30.500M40 32L32.500 26"/></svg>
            </button>
            <button aria-label="Account">
              <svg width="48" height="48" viewBox="0 0 48 48" stroke-width="2.500"><circle cx="24" cy="12" r="9.500"/><path d="M6.500 39V36Q6.500 26 17 25Q24 28 31 25Q41.500 26 41.500 36V39Q41.500 42 38 42H10Q6.500 42 6.500 39Z"/></svg>
            </button>
            <a class="back" href="#admin">
              <svg width="29" height="24" viewBox="0 0 29 24" stroke-width="3.500"><path d="M9 2H5Q2 2 2 5V19Q2 22 5 22H9M10 12H24M19 6L26 12L19 18Z"/></svg>
              Back to admin
            </a>
          </div>
        </header>

        <div class="head">
          <a class="arrow" href="#orders" aria-label="Back to orders">
            <svg width="29" height="30" viewBox="0 0 29 28" fill="none" stroke="currentColor" stroke-width="2"><path d="M15 1L2 14L15 27M2 14H29"/></svg>
          </a>
          <h1>#00050</h1>
          <button class="print">PRINT ${caret}</button>
          <button class="remove">REMOVE</button>
        </div>

        <div class="filters">
          ${this.filters.map(
            ([name, value, outline]) => html`<div class="filter">
              <button>${name} ${caret}</button>
              <span class=${classMap({ pill: true, outline })}>${value}</span>
            </div>`
          )}
        </div>

        <section class="card summary">
          <div class="when">
            <h2>DELIVERY TIME</h2>
            <div class="big">August 1, 2022, 11:00 AM - 11:30 AM<button aria-label="Edit delivery time">${pencil}</button></div>
            <div class="overdue">219 days 06:11:29</div>
          </div>
          <div class="type">
            <div>
              <h2>ORDER TYPE</h2>
              <div class="big">
                <svg class="car" viewBox="0 0 46 40" aria-hidden="true"><path fill="currentColor" fill-rule="evenodd" d="M14 1H32Q36 1 37.500 5L40 12H44Q46 12 46 14T44 17H42Q45 19 45 23V36Q45 39 42 39H39Q36 39 36 36V33H10V36Q10 39 7 39H4Q1 39 1 36V23Q1 19 4 17H2Q0 17 0 14T2 12H6L8.500 5Q10 1 14 1ZM14.500 6Q13 6 12.500 7.500L10 15H36L33.500 7.500Q33 6 31.500 6ZM9 21Q5.500 21 5.500 24T9.500 28T13 27Q12 21 9 21ZM37 21Q34 21 33 27Q34 28 36.500 28T40.500 24T37 21Z"/></svg>
                Delivery
              </div>
              <div class="due">Cash on delivery <b>37,54 zł</b></div>
            </div>
            <div class="client">
              <a href="#client">sdf sdf</a><button aria-label="Edit client">${pencil}</button><br />
              Cybernetyki 12 / 12, 03 Warszawa<br />
              sdf@mail.com, 23423
            </div>
          </div>
        </section>

        <div class="columns">
          <div class="col">
            <panel-card heading="Special instructions"><p class="text">-</p></panel-card>
            <panel-card heading="Order details">
              <div class="sheet">
                <table class="details">
                  <tr class="strong">
                    <th scope="row"><label for="method">Payment method</label></th>
                    <td><div class="field"><select id="method"><option>Cash on delivery</option></select>${caret}</div></td>
                  </tr>
                  <tr class="strong loose">
                    <th scope="row"><label for="cook">Who will prepare it</label></th>
                    <td><div class="field stretch"><select id="cook"><option>Nothing selected</option></select>${caret}</div></td>
                  </tr>
                  ${this.facts.map(([k, v]) => html`<tr><th scope="row">${k}</th><td>${v}</td></tr>`)}
                </table>
              </div>
            </panel-card>
          </div>
          <div class="col wide">
            <panel-card heading="Order">
              <div class="sheet">
                <table class="lines">
                  <tr class="product">
                    <th scope="row">
                      <a href="#product">Pizza Pepperoni - Duża</a> (27,99 zł)
                      <span class="variant">CIASTO PUSZYSTE</span>
                      Addons: Papryka (+4,00 zł)
                    </th>
                    <td><span class="qty">1</span> x 31,99 zł<span class="each">31,99 zł</span></td>
                  </tr>
                  <tr><th scope="row">Delivery price</th><td>5,55 zł</td></tr>
                  <tr class="total"><th scope="row">Total price</th><td>37,54 zł</td></tr>
                </table>
              </div>
            </panel-card>
            <panel-card heading="One the map"><delivery-map></delivery-map></panel-card>
          </div>
        </div>

        <panel-card heading="Order notes">
          <div class="notes"><textarea aria-label="Order notes" placeholder="Notes about this order"></textarea></div>
        </panel-card>
      </main>
    `;
  }
}
